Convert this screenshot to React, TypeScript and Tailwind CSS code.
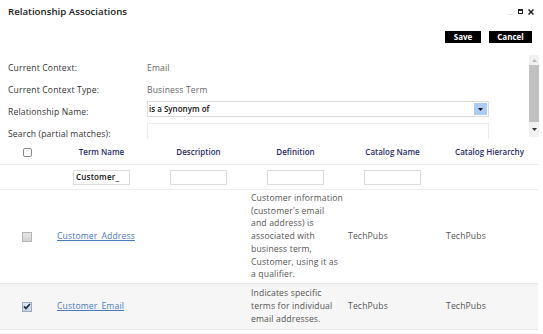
import React from "react";

const font = { fontFamily: '"Open Sans", "Liberation Sans", sans-serif' };

function Box({ variant }: { variant: "plain" | "gray" | "checked" }) {
  if (variant === "plain") {
    return <div className="w-[9px] h-[9px] rounded-[2px] border border-[#8a8a8a] bg-white" />;
  }
  if (variant === "gray") {
    return <div className="w-[10px] h-[10px] border border-[#b5b5b5] bg-gradient-to-b from-[#e6e6e6] to-[#d2d2d2]" />;
  }
  return (
    <div className="w-[10px] h-[10px] border border-[#9aa9c0] bg-gradient-to-b from-[#e3e9f2] to-[#c6d2e3] flex items-center justify-center">
      <svg width="8" height="7" viewBox="0 0 8 7">
        <path d="M1 3.3 L3 5.4 L7 1" stroke="#1f2d4a" strokeWidth="1.7" fill="none" />
      </svg>
    </div>
  );
}

export default function App() {
  const cols = "grid grid-cols-[53px_97px_97px_97px_97px_97px]";
  const txt = "text-[8.6px] tracking-[0.15px]";
  return (
    <div className="w-[543px] h-[334px] bg-white overflow-hidden" style={font}>
      {/* title bar */}
      <div className="h-[25px] flex items-center justify-between pl-[8px] pr-[9px]">
        <div className="text-[9.7px] font-semibold text-[#222]">Relationship Associations</div>
        <div className="flex items-center gap-[5px] pb-[2px]">
          <div className="w-[4px] h-px bg-[#ddd] mt-[6px]" />
          <div className="w-[5px] h-[5px] border border-[#222] border-t-2" />
          <svg width="6" height="6" viewBox="0 0 6 6">
            <path d="M0.5 0.5 L5.5 5.5 M5.5 0.5 L0.5 5.5" stroke="#222" strokeWidth="1.5" />
          </svg>
        </div>
      </div>
      {/* buttons */}
      <div className="flex justify-end gap-[8px] pr-[11px] pt-[6px]">
        <button className="w-[36px] h-[12px] bg-black text-white text-[8px] font-bold leading-none flex items-center justify-center">Save</button>
        <button className="w-[43px] h-[12px] bg-black text-white text-[8px] font-bold leading-none flex items-center justify-center">Cancel</button>
      </div>
      {/* form scroll area */}
      <div className="mt-[12px] h-[85px] flex overflow-hidden">
        <div className={`flex-1 pl-[8px] pt-[2px] ${txt}`}>
          <div className="h-[22px] flex items-center">
            <div className="w-[139px] text-[#333]">Current Context:</div>
            <div className="text-[#666]">Email</div>
          </div>
          <div className="h-[22px] flex items-center">
            <div className="w-[139px] text-[#333]">Current Context Type:</div>
            <div className="text-[#666]">Business Term</div>
          </div>
          <div className="h-[22px] flex items-start">
            <div className="w-[139px] text-[#333] leading-[12px] pt-[5px]">Relationship Name:</div>
            <div className="w-[342px] h-[16px] border border-[#dcdcdc] flex items-center justify-between pl-[1px] pr-[1px]">
              <span className="text-[#111] font-semibold text-[8px] tracking-normal">is a Synonym of</span>
              <div className="w-[13px] h-[12px] bg-[#aacdf4] flex items-center justify-center">
                <svg width="5" height="3" viewBox="0 0 5 3"><path d="M0 0 H5 L2.5 3 Z" fill="#111" /></svg>
              </div>
            </div>
          </div>
          <div className="h-[22px] flex items-start">
            <div className="w-[139px] text-[#333] leading-[12px] pt-[5px]">Search (partial matches):</div>
            <div className="w-[342px] h-[16px] border border-[#ececec] border-b-0" />
          </div>
        </div>
        <div className="w-[10px] mr-[4px] h-[82px] bg-[#f1f1f1] flex flex-col items-center">
          <div className="h-[10px] flex items-center justify-center">
            <svg width="5" height="3" viewBox="0 0 5 3"><path d="M0 3 H5 L2.5 0 Z" fill="#bbb" /></svg>
          </div>
          <div className="w-[10px] h-[57px] bg-[#c1c1c1]" />
          <div className="h-[14px] flex items-center justify-center">
            <svg width="5" height="3" viewBox="0 0 5 3"><path d="M0 0 H5 L2.5 3 Z" fill="#333" /></svg>
          </div>
        </div>
      </div>
      {/* table */}
      <div className="w-[538px]">
        <div className={`${cols} h-[25px] items-center border-b border-[#ececec] text-[8px] font-semibold text-[#2b2d6b]`}>
          <div className="flex justify-center pl-[1px]"><Box variant="plain" /></div>
          <div className="text-center">Term Name</div>
          <div className="text-center">Description</div>
          <div className="text-center">Definition</div>
          <div className="text-center">Catalog Name</div>
          <div className="text-center">Catalog Hierarchy</div>
        </div>
        <div className={`${cols} h-[25px] items-center border-b border-[#ececec] text-[8px]`}>
          <div />
          <div className="flex justify-center">
            <div className="w-[57px] h-[15px] border border-[#dcdcdc] text-[#111] font-semibold flex items-center pl-[2px] tracking-[0.2px]">Customer_</div>
          </div>
          <div className="flex justify-center"><div className="w-[57px] h-[15px] border border-[#dcdcdc]" /></div>
          <div className="flex justify-center"><div className="w-[57px] h-[15px] border border-[#dcdcdc]" /></div>
          <div className="flex justify-center"><div className="w-[57px] h-[15px] border border-[#dcdcdc]" /></div>
          <div />
        </div>
        <div className={`${cols} h-[94px] items-center border-b border-[#e6e6e6] ${txt} text-[#555]`}>
          <div className="flex justify-center pl-[1px]"><Box variant="gray" /></div>
          <div className="pl-[4px]"><a className="text-[#4a79c0] underline">Customer_Address</a></div>
          <div />
          <div className="pl-[4px] leading-[12.8px]">
            Customer information<br />(customer's email<br />and address) is<br />associated with<br />business term,<br />Customer, using it as<br />a qualifier.
          </div>
          <div className="pl-[4px]">TechPubs</div>
          <div className="pl-[5px]">TechPubs</div>
        </div>
        <div className={`${cols} h-[46px] items-center border-b border-[#e6e6e6] bg-[#f6f6f6] ${txt} text-[#555]`}>
          <div className="flex justify-center pl-[1px]"><Box variant="checked" /></div>
          <div className="pl-[4px]"><a className="text-[#4a79c0] underline">Customer_Email</a></div>
          <div />
          <div className="pl-[4px] leading-[12.8px]">
            Indicates specific<br />terms for individual<br />email addresses.
          </div>
          <div className="pl-[4px]">TechPubs</div>
          <div className="pl-[5px]">TechPubs</div>
        </div>
      </div>
    </div>
  );
}
